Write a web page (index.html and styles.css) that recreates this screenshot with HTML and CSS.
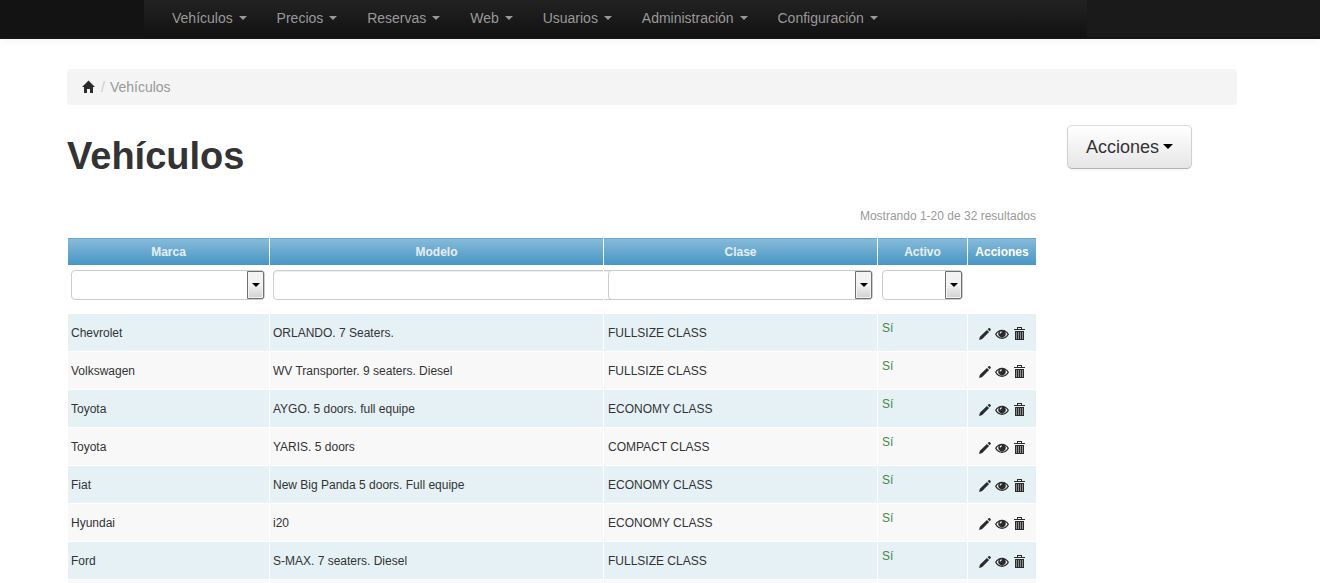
FILE: index.html
```
<!DOCTYPE html>
<html lang="es">
<head>
<meta charset="utf-8">
<title>Vehículos</title>
<link rel="stylesheet" href="styles.css">
</head>
<body>
<svg class="sprite" aria-hidden="true">
  <symbol id="home" viewBox="0 0 14 14"><path d="M6.500 0.500L13 7H11v6H8V9H5v4H2V7H0z"/></symbol>
  <symbol id="pencil" viewBox="0 0 14 14"><path d="M1 13l0.900-3.200L8.900 2.900l2.200 2.200-6.900 7zM9.600 2.200l1-0.900c0.500-0.400 0.900-0.400 1.300 0l0.700 0.700c0.400 0.400 0.400 0.900 0 1.300l-0.900 1z"/></symbol>
  <symbol id="eye" viewBox="0 0 14 14"><path fill-rule="evenodd" d="M0 7.300C1.600 4.300 4.100 2.700 7 2.700s5.400 1.600 7 4.600C12.400 10.300 9.900 11.900 7 11.900S1.600 10.300 0 7.300zM1.500 7.300C2.800 9.500 4.700 10.700 7 10.700s4.200-1.200 5.500-3.400C11.900 6.200 11.100 5.400 10.200 4.800a3.700 3.700 0 1 1-6.400 0C2.900 5.400 2.100 6.200 1.500 7.300zM6.800 4.300c-1.200 0-2.100 0.900-2.100 2.100h1.100c0-0.600 0.400-1 1-1z"/></symbol>
  <symbol id="trash" viewBox="0 0 14 14"><path shape-rendering="crispEdges" fill-rule="evenodd" d="M5 0h5v2h3v1H2V2h3zM6 1v1h3V1zM3 4h9v9H3zM4 5v7h1V5zM6 5v7h1V5zM8 5v7h1V5zM10 5v7h1V5z"/><path class="bin" d="M4 5h7v7H4z"/></symbol>
</svg>
<header class="navbar">
  <div class="nav-left"></div>
  <nav class="nav">
    <a href="#">Vehículos <b class="caret"></b></a>
    <a href="#">Precios <b class="caret"></b></a>
    <a href="#">Reservas <b class="caret"></b></a>
    <a href="#">Web <b class="caret"></b></a>
    <a href="#">Usuarios <b class="caret"></b></a>
    <a href="#">Administración <b class="caret"></b></a>
    <a href="#">Configuración <b class="caret"></b></a>
  </nav>
  <div class="nav-right"></div>
</header>
<div class="page">
  <div class="container">
    <div class="breadcrumb">
      <a href="#" aria-label="Inicio"><svg class="icon"><use href="#home"/></svg></a>
      <span class="divider">/</span>
      <span>Vehículos</span>
    </div>
    <div class="row">
      <main class="content">
        <h1>Vehículos</h1>
        <div class="summary">Mostrando 1-20 de 32 resultados</div>
        <table class="items">
          <colgroup><col class="c-marca"><col class="c-modelo"><col class="c-clase"><col class="c-activo"><col class="c-acciones"></colgroup>
          <thead>
            <tr><th><a href="#">Marca</a></th><th><a href="#">Modelo</a></th><th><a href="#">Clase</a></th><th><a href="#">Activo</a></th><th>Acciones</th></tr>
            <tr class="filters">
              <td><div class="select"><select aria-label="Marca"><option></option></select></div></td>
              <td><input class="field" type="text" aria-label="Modelo"></td>
              <td><div class="select"><select aria-label="Clase"><option></option></select></div></td>
              <td><div class="select"><select aria-label="Activo"><option></option></select></div></td>
              <td></td>
            </tr>
          </thead>
          <tbody id="rows"></tbody>
        </table>
      </main>
      <aside><button class="btn" type="button">Acciones<b class="caret"></b></button></aside>
    </div>
  </div>
</div>
<script src="rows.js"></script>
</body>
</html>
```
FILE: rows.js
```
const vehicles = [
  ["Chevrolet", "ORLANDO. 7 Seaters.", "FULLSIZE CLASS"],
  ["Volkswagen", "WV Transporter. 9 seaters. Diesel", "FULLSIZE CLASS"],
  ["Toyota", "AYGO. 5 doors. full equipe", "ECONOMY CLASS"],
  ["Toyota", "YARIS. 5 doors", "COMPACT CLASS"],
  ["Fiat", "New Big Panda 5 doors. Full equipe", "ECONOMY CLASS"],
  ["Hyundai", "i20", "ECONOMY CLASS"],
  ["Ford", "S-MAX. 7 seaters. Diesel", "FULLSIZE CLASS"]
];
const action = (icon, label) =>
  `<a href="#" aria-label="${label}"><svg class="icon"><use href="#${icon}"/></svg></a>`;
const actions = action("pencil", "Editar") + action("eye", "Ver") + action("trash", "Borrar");
document.getElementById("rows").innerHTML = vehicles.map(([brand, model, type]) =>
  `<tr><td>${brand}</td><td>${model}</td><td>${type}</td><td class="active">Sí</td>` +
  `<td><div class="actions">${actions}</div></td></tr>`
).join("") + "<tr><td></td><td></td><td></td><td></td><td></td></tr>";
```
FILE: styles.css
```
* { box-sizing: border-box; }
body {
  margin: 0;
  height: 100vh;
  overflow: hidden;
  background: #fff;
  color: #333;
  font: 14px/20px "Liberation Sans", Arial, sans-serif;
}
a { color: inherit; text-decoration: none; }
.sprite { display: none; }
.icon { display: block; width: 14px; height: 14px; fill: #2b2b2b; }
.bin { fill: #2b2b2b; fill-opacity: 0.5; }
.caret {
  display: inline-block;
  margin-left: 2px;
  border: 4px solid transparent;
  border-top-color: currentColor;
  border-bottom: 0;
  vertical-align: middle;
}

.navbar {
  display: flex;
  height: 39px;
  border-bottom: 1px solid #1c1819;
  box-shadow: 0 1px 8px rgba(0, 0, 0, 0.06);
}
.nav-left { flex: 0 0 144px; background: #131313; }
.nav {
  display: flex;
  flex: 1;
  padding-left: 13px;
  background: linear-gradient(#222, #111);
  color: #999;
}
.nav a { padding: 8px 15px 10px; white-space: nowrap; }
.nav .caret { margin-bottom: 2px; }
.nav-right { flex: 0 0 233px; background: #1a1a1a; border-bottom: 1px solid #111; }

.page { padding: 30px 16px 0 0; }
.container { max-width: 1170px; margin: 0 auto; }
.breadcrumb {
  display: flex;
  align-items: center;
  gap: 5px;
  margin-bottom: 20px;
  padding: 8px 15px;
  border-radius: 4px;
  background: #f4f4f4;
  color: #999;
}
.divider { color: #ccc; }
.row { display: flex; align-items: flex-start; gap: 30px; }
.content { flex: 0 1 970px; }
h1 { margin: 0; padding: 11px 0 10px; font-size: 38px; line-height: 40px; }
.summary { margin: 20px 1px 11px; color: #999; font-size: 12px; text-align: right; }
.btn {
  height: 44px;
  padding: 0 18px;
  border: 1px solid #ccc;
  border-color: #dadada #d0d0d0 #b3b3b3;
  border-radius: 5px;
  background: linear-gradient(#fff, #e6e6e6);
  box-shadow: 0 1px 2px rgba(0, 0, 0, 0.05);
  color: #333;
  font: 18px/20px "Liberation Sans", Arial, sans-serif;
  white-space: nowrap;
}
.btn .caret { margin: 0 0 4px 4px; border-width: 5px 5px 0; border-top-color: #000; }

.items {
  width: 100%;
  table-layout: fixed;
  border-collapse: collapse;
  font-size: 12px;
}
.c-marca { width: 202px; }
.c-modelo { width: 334px; }
.c-clase { width: 274px; }
.c-activo { width: 90px; }
.c-acciones { width: 69px; }
.items th, .items td { border: 1px solid #fff; padding: 0 3px; }
.items td:nth-child(3) { padding-left: 4px; }
.items th {
  height: 28px;
  background: linear-gradient(#88bbd9, #4595c4);
  color: #fff;
  text-align: center;
}
.items th a { color: #e6eef3; }
.items .filters td { padding: 4px 4px 13px; }
.items .filters td:nth-child(-n+2) { padding-left: 3px; }
.select { position: relative; }
.select select, .field {
  display: block;
  width: 100%;
  height: 30px;
  border: 1px solid #ccc;
  border-radius: 4px;
  background: #fff;
  appearance: none;
}
.field { width: 345px; box-shadow: inset 0 1px 1px rgba(0, 0, 0, 0.075); }
.select::before {
  content: "";
  position: absolute;
  top: 1px;
  right: 1px;
  width: 17px;
  height: 28px;
  border: 1px solid #707070;
  border-radius: 0 2px 2px 0;
  box-shadow: inset 0 0 0 1px #f4f4f4;
  background: linear-gradient(#f2f2f2 50%, #d0d0d0);
  pointer-events: none;
}
.select::after {
  content: "";
  position: absolute;
  top: 13px;
  right: 5px;
  border: 4px solid transparent;
  border-top-color: #000;
  border-bottom: 0;
  pointer-events: none;
}
.select::before, .select::after { box-sizing: border-box; }
tbody tr { height: 38px; background: #f8f8f8; }
tbody tr:nth-child(odd) { background: #e5f1f4; }
.items .active { padding: 4px; color: #468847; vertical-align: top; }
.actions { display: flex; justify-content: center; gap: 3px; padding-top: 2px; }
```
